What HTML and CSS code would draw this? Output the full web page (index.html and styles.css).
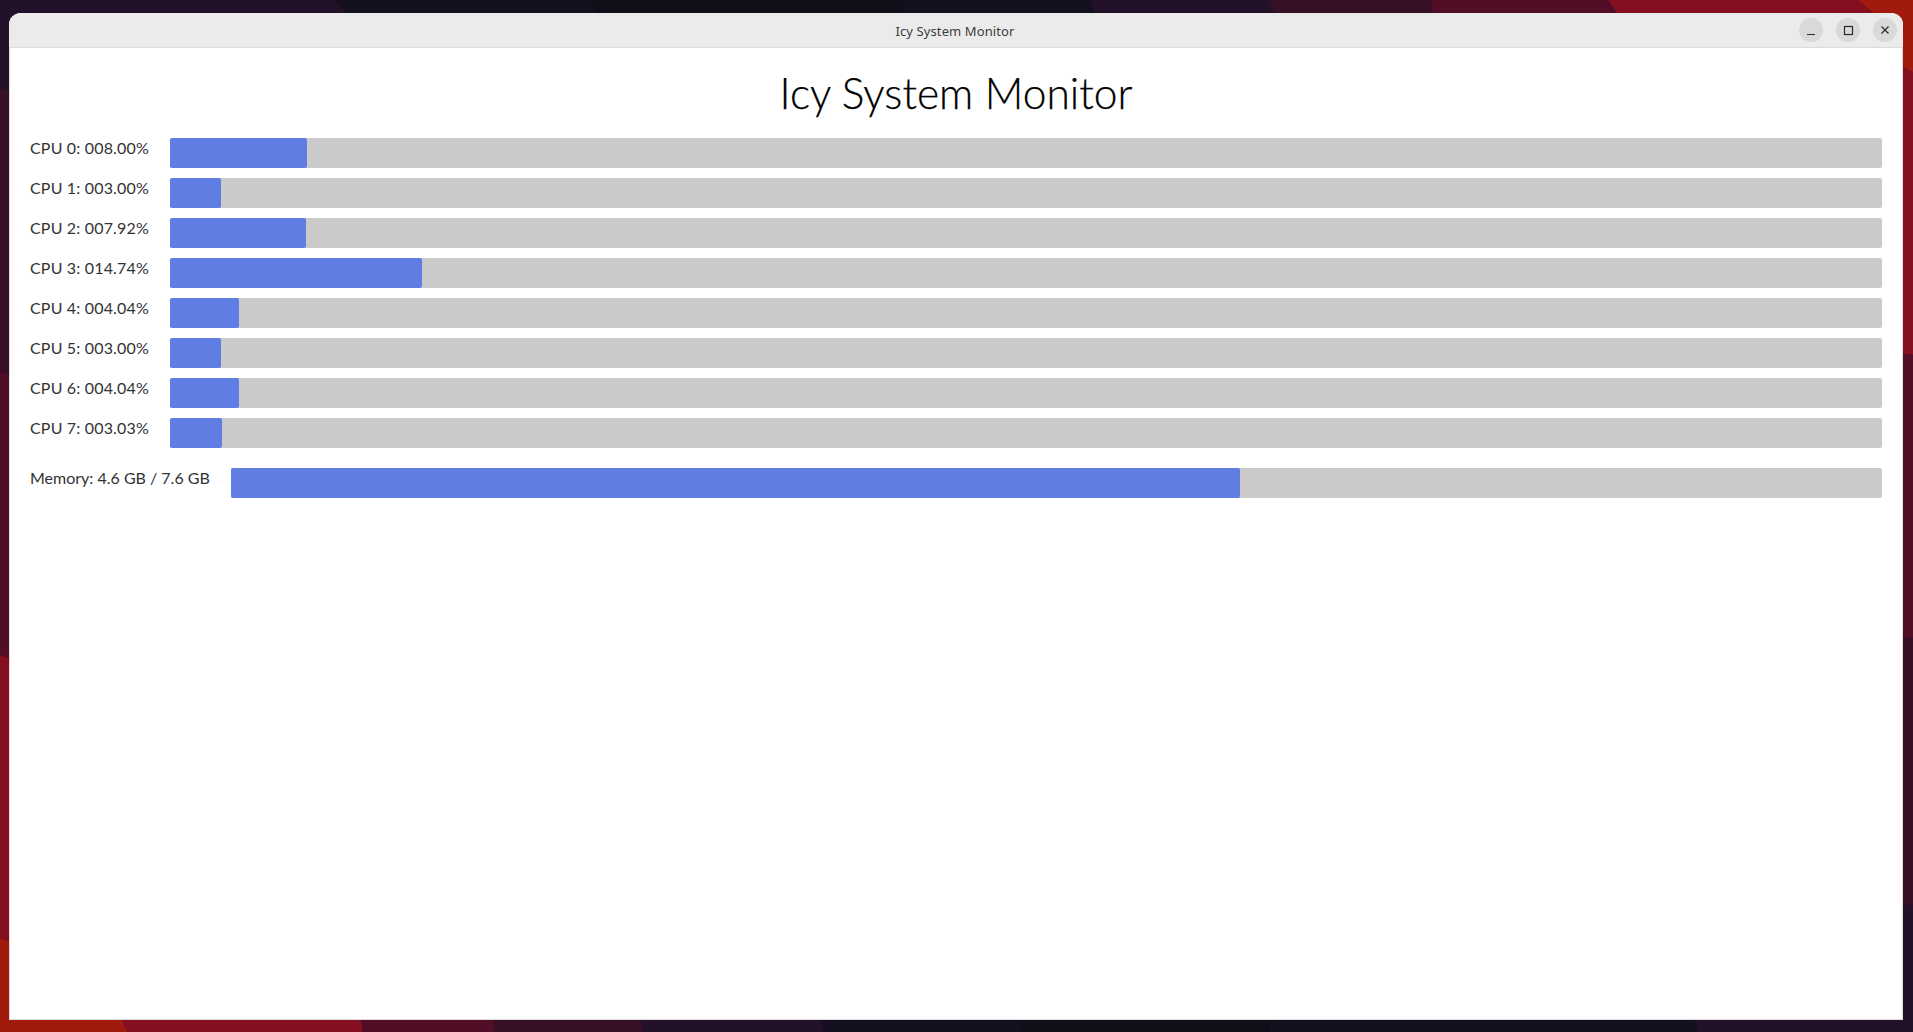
FILE: index.html
```html
<!DOCTYPE html>
<html lang="en">
<head>
  <meta charset="UTF-8">
  <title>Icy System Monitor</title>
  <link rel="stylesheet" href="styles.css">
</head>
<body>
  <!-- desktop wallpaper, only the edges show round the window -->
  <svg class="wallpaper" viewBox="0 0 1913 1032" preserveAspectRatio="none" aria-hidden="true">
    <rect class="w-purple" width="1913" height="1032"/>
    <!-- top edge -->
    <polygon class="w-ink" points="336,0 592,0 597,20 350,20"/>
    <polygon class="w-black" points="592,0 905,0 907,20 597,20"/>
    <polygon class="w-ink" points="905,0 1090,0 1098,20 907,20"/>
    <polygon class="w-plum" points="1269,0 1431,0 1434,20 1278,20"/>
    <polygon class="w-wine" points="1431,0 1608,0 1622,20 1434,20"/>
    <polygon class="w-crimson" points="1608,0 1858,0 1880,20 1622,20"/>
    <!-- right edge -->
    <polygon class="w-crimson" points="1880,20 1913,20 1913,355 1880,353"/>
    <polygon class="w-red" points="1858,0 1913,0 1913,72 1895,62 1873,13"/>
    <polygon class="w-wine" points="1890,353 1913,355 1913,638 1890,636"/>
    <polygon class="w-plum" points="1890,636 1913,638 1913,905 1890,903"/>
    <!-- left edge -->
    <polygon class="w-plum" points="0,88 20,94 20,378 0,372"/>
    <polygon class="w-wine" points="0,372 20,378 20,661 0,655"/>
    <polygon class="w-crimson" points="0,655 20,661 20,944 0,938"/>
    <polygon class="w-red" points="0,938 20,944 20,1032 0,1032"/>
    <!-- bottom edge -->
    <polygon class="w-red" points="0,1010 117,1010 128,1032 0,1032"/>
    <polygon class="w-crimson" points="117,1010 360,1010 363,1032 128,1032"/>
    <polygon class="w-wine" points="360,1010 494,1010 494,1032 363,1032"/>
    <polygon class="w-plum" points="494,1010 641,1010 642,1032 494,1032"/>
    <polygon class="w-ink" points="818,1010 1019,1010 1020,1032 823,1032"/>
    <polygon class="w-black" points="1019,1010 1271,1010 1270,1032 1020,1032"/>
    <polygon class="w-ink" points="1271,1010 1692,1010 1699,1032 1270,1032"/>
  </svg>

  <div class="window">
    <header class="titlebar">
      <span class="titlebar-name">Icy System Monitor</span>
      <div class="titlebar-buttons">
        <button class="win-btn" aria-label="Minimize">
          <svg viewBox="0 0 16 16"><path d="M4 12.5h8" /></svg>
        </button>
        <button class="win-btn" aria-label="Maximize">
          <svg viewBox="0 0 16 16"><rect x="4.5" y="4.5" width="8" height="8" /></svg>
        </button>
        <button class="win-btn" aria-label="Close">
          <svg viewBox="0 0 16 16"><path d="M4.5 4.5l7 7M11.5 4.5l-7 7" /></svg>
        </button>
      </div>
    </header>

    <main class="content">
      <h1>Icy System Monitor</h1>

      <div class="meter meter-cpu">
        <span class="meter-label">CPU 0: 008.00%</span>
        <div class="track"><div class="fill" style="width: 8%"></div></div>
      </div>
      <div class="meter meter-cpu">
        <span class="meter-label">CPU 1: 003.00%</span>
        <div class="track"><div class="fill" style="width: 3%"></div></div>
      </div>
      <div class="meter meter-cpu">
        <span class="meter-label">CPU 2: 007.92%</span>
        <div class="track"><div class="fill" style="width: 7.92%"></div></div>
      </div>
      <div class="meter meter-cpu">
        <span class="meter-label">CPU 3: 014.74%</span>
        <div class="track"><div class="fill" style="width: 14.74%"></div></div>
      </div>
      <div class="meter meter-cpu">
        <span class="meter-label">CPU 4: 004.04%</span>
        <div class="track"><div class="fill" style="width: 4.04%"></div></div>
      </div>
      <div class="meter meter-cpu">
        <span class="meter-label">CPU 5: 003.00%</span>
        <div class="track"><div class="fill" style="width: 3%"></div></div>
      </div>
      <div class="meter meter-cpu">
        <span class="meter-label">CPU 6: 004.04%</span>
        <div class="track"><div class="fill" style="width: 4.04%"></div></div>
      </div>
      <div class="meter meter-cpu">
        <span class="meter-label">CPU 7: 003.03%</span>
        <div class="track"><div class="fill" style="width: 3.03%"></div></div>
      </div>

      <div class="meter meter-memory">
        <span class="meter-label">Memory: 4.6 GB / 7.6 GB</span>
        <div class="track"><div class="fill" style="width: 61.1%"></div></div>
      </div>
    </main>
  </div>
</body>
</html>
```

FILE: styles.css
```css
html, body {
  height: 100%;
}
body {
  margin: 0;
  padding: 13px 10px 12px 9px;
  box-sizing: border-box;
  overflow: hidden;
  font-family: 'Lato', sans-serif;
  background: #231029;
}
.wallpaper {
  position: absolute;
  top: 0;
  left: 0;
  width: 1913px;
  height: 1032px;
}
.w-purple { fill: #231029; }
.w-ink { fill: #15101f; }
.w-black { fill: #0f0f19; }
.w-plum { fill: #371027; }
.w-wine { fill: #520e27; }
.w-crimson { fill: #840f20; }
.w-red { fill: #a2190e; }

.window {
  position: relative;
  height: 100%;
  display: flex;
  flex-direction: column;
  background: white;
  border-radius: 12px 12px 0 0;
  overflow: hidden;
  box-shadow: inset 0 0 0 1px #dcdcdc;
}
.titlebar {
  position: relative;
  height: 34px;
  flex: none;
  display: flex;
  align-items: center;
  justify-content: center;
  background: #ebebeb;
  border-bottom: 1px solid #dcdcdc;
}
.titlebar-name {
  font-family: 'Noto Sans', sans-serif;
  font-size: 13px;
  letter-spacing: 0.1px;
  color: #3d3d3d;
  transform: translate(-1px, 1px);
}
.titlebar-buttons {
  position: absolute;
  top: 5px;
  right: 6px;
  display: flex;
  gap: 13px;
}
.win-btn {
  width: 24px;
  height: 24px;
  padding: 4px;
  border: none;
  border-radius: 50%;
  background: #d9d9d9;
}
.win-btn svg {
  display: block;
  width: 16px;
  height: 16px;
  fill: none;
  stroke: #2b2b2b;
  stroke-width: 1.2;
}

.content {
  flex: 1;
  padding: 20px 21px 0 21px;
  display: flex;
  flex-direction: column;
  gap: 10px;
}
h1 {
  margin: 0 0 10px;
  font-size: 42.5px;
  font-weight: 300;
  line-height: 50px;
  text-align: center;
  color: #000;
  -webkit-text-stroke: 0.25px #000;
}
.meter {
  display: flex;
  align-items: flex-start;
  gap: 21px;
}
.meter-memory {
  margin-top: 10px;
}
.meter-label {
  font-size: 16px;
  font-weight: 400;
  line-height: 19px;
  color: #333;
  white-space: nowrap;
}
.meter-cpu .meter-label {
  width: 119px;
  letter-spacing: 0.17px;
}
.track {
  flex: 1;
  height: 30px;
  background: #cacaca;
  border-radius: 2px;
}
.fill {
  height: 100%;
  background: #5f7de2;
  border-radius: 2px;
}
```
